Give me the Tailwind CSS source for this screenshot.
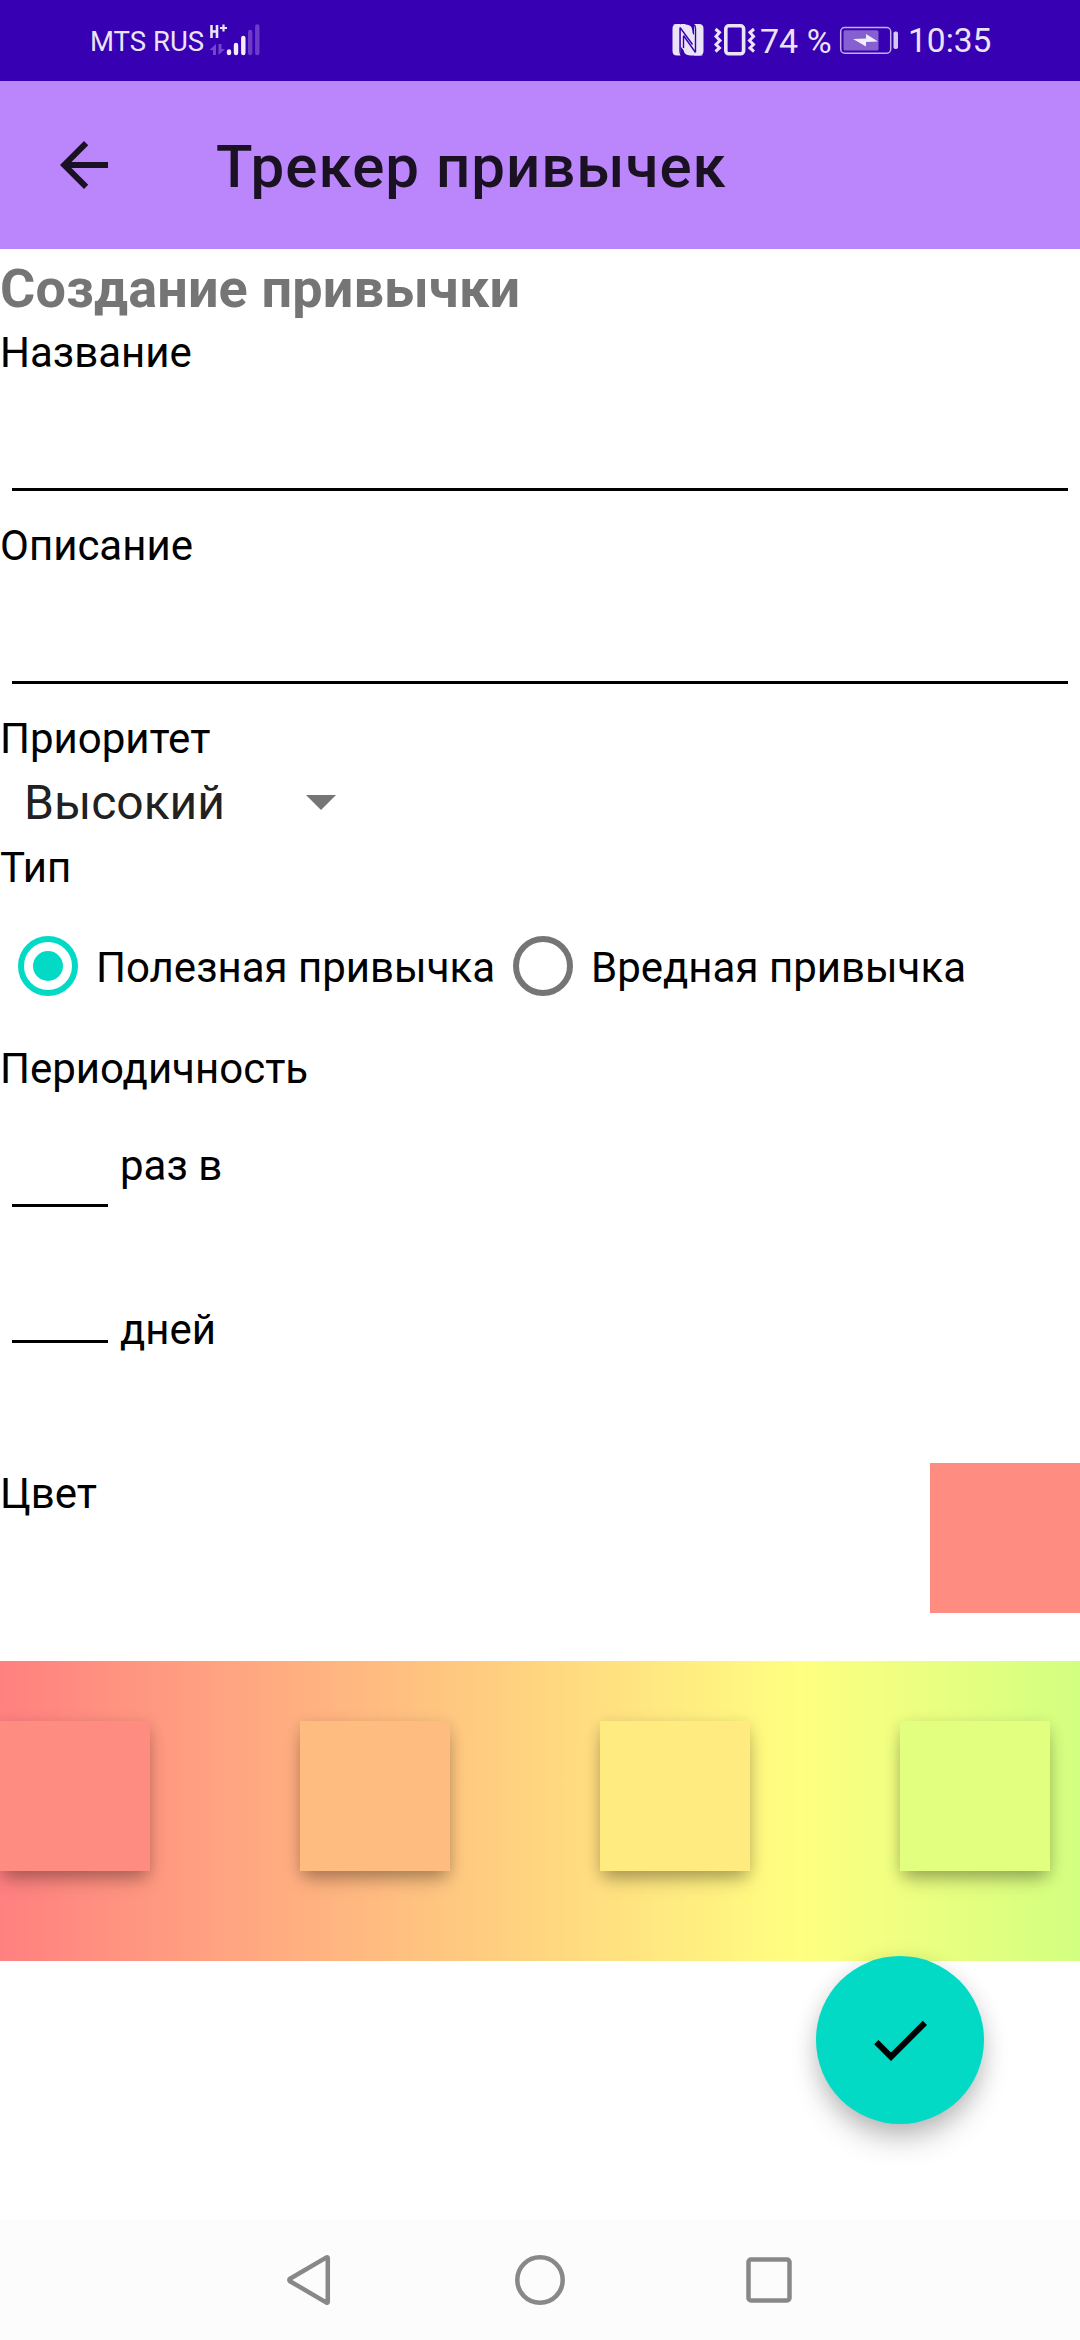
<!DOCTYPE html>
<html lang="ru">
<head>
<meta charset="utf-8">
<title>Трекер привычек</title>
<script src="https://cdn.jsdelivr.net/npm/@tailwindcss/browser@4"></script>
</head>
<body class="bg-white">
<div class="relative flex h-[2340px] w-[1080px] flex-col overflow-hidden bg-white font-[Roboto,sans-serif] text-[42px] text-black">

  <!-- Status bar -->
  <header class="flex h-[81px] shrink-0 bg-[#3700b3] pl-[90px] text-[#ebe3f7]">
    <span class="w-[119px] shrink-0 whitespace-nowrap text-[27.500px] leading-[83px]">MTS RUS</span>
    <svg class="h-[81px] w-[54px] shrink-0" viewBox="209 0 54 81" fill="none">
      <path d="M211.500 25v13M217 25v13M211.500 31.500h5.500" stroke="#ebe3f7" stroke-width="2.600"/>
      <path d="M220 28h7M223.500 24.500v7" stroke="#ebe3f7" stroke-width="2.200"/>
      <path d="M216 44v11h-3v-5h-3.500zM218.500 55V44h3v5h3.500z" fill="#7346cb"/>
      <path d="M229 51.500v1.500M236 45v8M243.300 38v15" stroke="#f3edfb" stroke-width="4.400" stroke-linecap="round"/>
      <path d="M250.200 32v21M257.300 26.500V53" stroke="#6c3cc9" stroke-width="4.400" stroke-linecap="round"/>
    </svg>
    <svg class="ml-[407px] h-[81px] w-[38px] shrink-0" viewBox="670 0 38 81">
      <path d="M677 24h3.500v31.500H677q-4.500 0-4.500-4.500V28.500q0-4.500 4.500-4.500zM681 24h4l9 11v17l-9-12v12l-4-5zM694 24h5q4.500 0 4.500 4.500V51q0 4.500-4.500 4.500h-5z" fill="#ebe3f7"/>
      <path d="M673 24.500h12.500q7 0 7 7V44L680 28M703 55.500h-12.500q-7 0-7-7V36L696 52z" fill="#ebe3f7"/>
      <path d="M680 27.500v24q0 3 2 4M695.500 52.500v-24q0-3-2-4M680 27.500l12.500 17M683.500 35.500l12 17M683.500 36v12" fill="none" stroke="#3700b3" stroke-width="1.400"/>
    </svg>
    <svg class="h-[81px] w-[51px] shrink-0" viewBox="708 0 51 81" fill="none" stroke="#ebe3f7">
      <rect x="725.800" y="25.800" width="17.800" height="28" rx="3" stroke-width="3.600"/>
      <path d="M715.500 29l4 3.500-3.500 4 4 4-4 4 3.500 3.500-4 3.500M754 29l-4 3.500 3.500 4-4 4 4 4-3.500 3.500 4 3.500" stroke-width="3"/>
    </svg>
    <span class="w-[79px] shrink-0 whitespace-nowrap pl-px text-[34px] leading-[82px]">74 %</span>
    <svg class="h-[81px] w-[66px] shrink-0" viewBox="838 0 66 81">
      <rect x="840.700" y="27.600" width="50" height="25.600" rx="4" fill="none" stroke="#c3b0e8" stroke-width="1.500"/>
      <rect x="843.500" y="30.300" width="35" height="20.200" rx="1.500" fill="#865fd1"/>
      <path d="M853 39l13-.5v-4.500L878 41.500l-12 .5v4.500z" fill="#f1ecfa"/>
      <rect x="893.500" y="31.500" width="4.500" height="17.500" rx="1.800" fill="#d6c9f0"/>
    </svg>
    <span class="ml-[4px] whitespace-nowrap text-[33.500px] leading-[82px]">10:35</span>
  </header>

  <!-- App bar -->
  <div class="flex h-[168px] shrink-0 items-center bg-[#bb86fc] pl-12">
    <svg class="h-[72px] w-[72px]" viewBox="0 0 24 24" fill="#1a1122"><path d="M20 11H7.830l5.590-5.590L12 4l-8 8 8 8 1.410-1.410L7.830 13H20z"/></svg>
    <h1 class="ml-24 pt-[3px] text-[60px] font-medium leading-[70px] tracking-[1px] text-[#1a1122]">Трекер привычек</h1>
  </div>

  <!-- Form -->
  <main class="flex flex-col">
    <h2 class="h-[73px] text-[54px] font-bold leading-[79px] tracking-[0.130px] text-[#757575]">Создание привычки</h2>

    <label class="h-[57px] leading-[61px]">Название</label>
    <div class="flex h-[136px] flex-col px-3 pb-6"><div class="mt-auto h-[3px] bg-black"></div></div>

    <label class="h-[57px] leading-[61px]">Описание</label>
    <div class="flex h-[136px] flex-col px-3 pb-6"><div class="mt-auto h-[3px] bg-black"></div></div>

    <label class="h-[57px] leading-[61px]">Приоритет</label>
    <div class="flex h-[72px] w-[357px] justify-between pl-6 text-[48px] leading-[75px] text-[#212121]">
      <span>Высокий</span>
      <svg class="h-[72px] w-[72px]" viewBox="0 0 24 24" fill="#757575"><path d="M7 10l5 5 5-5z"/></svg>
    </div>

    <label class="h-[57px] leading-[61px]">Тип</label>
    <div class="flex h-36 items-center leading-[60px]">
      <div class="flex w-[495px] items-center">
        <svg class="h-24 w-24 shrink-0" viewBox="0 0 96 96"><circle cx="48" cy="48" r="27" fill="none" stroke="#03dac5" stroke-width="6"/><circle cx="48" cy="48" r="15" fill="#03dac5"/></svg>
        <span class="whitespace-nowrap pt-[3px]">Полезная привычка</span>
      </div>
      <div class="flex items-center">
        <svg class="h-24 w-24 shrink-0" viewBox="0 0 96 96"><circle cx="48" cy="48" r="27" fill="none" stroke="#757575" stroke-width="6"/></svg>
        <span class="whitespace-nowrap pt-[3px]">Вредная привычка</span>
      </div>
    </div>

    <label class="h-[57px] leading-[61px]">Периодичность</label>
    <div class="flex h-[136px]">
      <div class="flex w-[120px] flex-col px-3 pb-6"><div class="mt-auto h-[3px] bg-black"></div></div>
      <span class="pt-10 leading-[61px]">раз в</span>
    </div>
    <div class="flex h-[232px]">
      <div class="flex h-[136px] w-[120px] flex-col px-3 pb-6"><div class="mt-auto h-[3px] bg-black"></div></div>
      <span class="pt-[68px] leading-[61px]">дней</span>
    </div>

    <div class="flex h-[198px] items-start justify-between">
      <label class="leading-[61px]">Цвет</label>
      <div class="size-[150px] bg-[#ff8c80]"></div>
    </div>

    <div class="flex h-[300px] items-start gap-[150px] overflow-hidden bg-[linear-gradient(90deg,#ff8080_0px,#ffff80_800px,#80ff80_1600px)] pt-[60px]">
      <div class="size-[150px] shrink-0 bg-[#ff8c80] shadow-[0_12px_18px_-4px_rgba(0,0,0,0.27),0_3px_14px_rgba(0,0,0,0.14)]"></div>
      <div class="size-[150px] shrink-0 bg-[#ffbc80] shadow-[0_12px_18px_-4px_rgba(0,0,0,0.27),0_3px_14px_rgba(0,0,0,0.14)]"></div>
      <div class="size-[150px] shrink-0 bg-[#ffeb80] shadow-[0_12px_18px_-4px_rgba(0,0,0,0.27),0_3px_14px_rgba(0,0,0,0.14)]"></div>
      <div class="size-[150px] shrink-0 bg-[#e3ff80] shadow-[0_12px_18px_-4px_rgba(0,0,0,0.27),0_3px_14px_rgba(0,0,0,0.14)]"></div>
    </div>
  </main>

  <!-- Floating action button -->
  <button class="absolute right-24 bottom-[216px] flex size-[168px] items-center justify-center rounded-full bg-[#03dac5] shadow-[0_18px_30px_-4px_rgba(0,0,0,0.24),0_3px_22px_rgba(0,0,0,0.1)]">
    <svg class="h-[72px] w-[72px]" viewBox="0 0 24 24"><path d="M9 16.170L4.830 12l-1.420 1.410L9 19 21 7l-1.410-1.410z"/></svg>
  </button>

  <!-- System navigation -->
  <nav class="mt-auto flex h-[120px] shrink-0 items-center justify-center gap-[169px] bg-[#fcfcfc]">
    <svg class="size-[60px]" viewBox="0 0 60 60" fill="none" stroke="#888" stroke-width="4.500" stroke-linejoin="round"><path d="M46.800 8v44q-.3 1.200-1.300.6L9 31.200q-1.400-1.200 0-2.400L45.500 7.400q1-.6 1.300.6z"/></svg>
    <svg class="size-[60px]" viewBox="0 0 60 60" fill="none" stroke="#888" stroke-width="4.500"><circle cx="30" cy="30" r="22.700"/></svg>
    <svg class="size-[60px]" viewBox="0 0 60 60" fill="none" stroke="#888" stroke-width="4.500"><rect x="9.500" y="9.500" width="41" height="41" rx="2.500"/></svg>
  </nav>
</div>
</body>
</html>
